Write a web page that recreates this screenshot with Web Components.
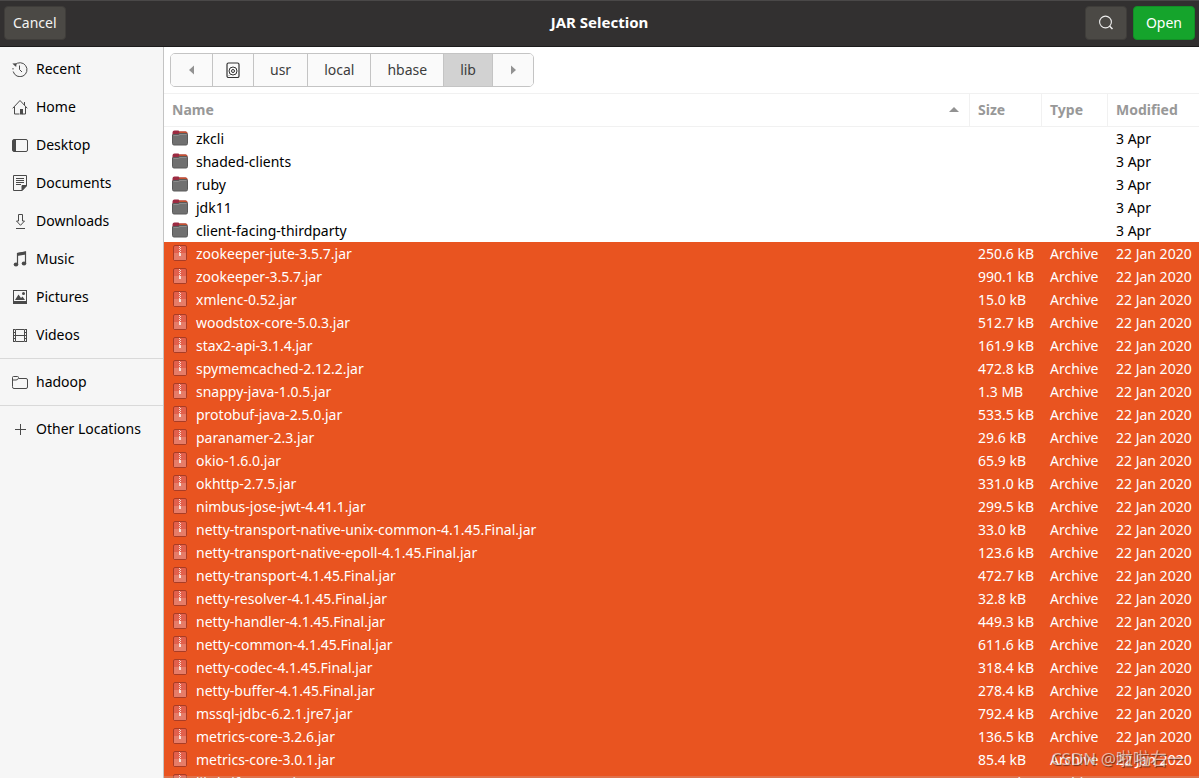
<!DOCTYPE html>
<html lang="en">
<head>
<meta charset="utf-8">
<title>JAR Selection</title>
<style>
html, body { margin: 0; height: 100%; }
body { font: 14px/23px "Noto Sans", "Noto Sans CJK SC", sans-serif; color: #000; background: #fff; overflow: hidden; }
</style>
</head>
<body>
<jar-dialog></jar-dialog>
<script>
const svg = (body, w = 16, h = 16) =>
  `<svg width="${w}" height="${h}" viewBox="0 0 ${w} ${h}" fill="none" stroke="#4a4a4a" aria-hidden="true">${body}</svg>`;

const ICONS = {
  recent: svg('<path d="M2.8 4A7 7 0 1 1 1.200 10.500" /><path d="M.3 2.500 4.500 2.200 4.200 6z" fill="#4a4a4a" stroke="none"/><path d="M1 7v1.500M7.500 4.500v4l2.500 2.500"/>'),
  home: svg('<path d="M.7 9.300 8 1.500l7.300 7.800M2.500 8v7H7.500M10.500 15h3V8M12.500 3v3"/><path d="M8 10h3v5.500H8z" fill="#4a4a4a" stroke="none"/>'),
  desktop: svg('<rect x=".5" y="2.500" width="15" height="12" rx="1.500"/><path d="M1 3h3v11H1z" fill="#4a4a4a" stroke="none"/>'),
  documents: svg('<path d="M1.500.5h13V11L10 15.500H1.500z"/><path d="M14.500 10.500H10v5z" fill="#4a4a4a"/><path d="M4 3.500h8M4 5.500h8M4 7.500h8M4 9.500h5"/>'),
  downloads: svg('<path d="M6.500 1.500h4V8h2L8.500 12.300 4.500 8h2zM4 15.500h9"/>'),
  music: svg('<path d="M5.500 13V2.500L13.500 1v11" stroke-width="1.200"/><path d="M5 2 14 .500v3L5 5z" fill="#4a4a4a" stroke="none"/><ellipse cx="4" cy="13.500" rx="2.300" ry="1.900" fill="#4a4a4a" stroke="none"/><ellipse cx="12" cy="12.500" rx="2.300" ry="1.900" fill="#4a4a4a" stroke="none"/>'),
  pictures: svg('<rect x="1.500" y="1.500" width="13" height="13"/><path d="M3 11 6.500 5.500 9 9l1.500-1.500L13 11zM1 12h14v3H1z" fill="#4a4a4a" stroke="none"/><circle cx="11.500" cy="4.500" r="1.500" fill="#4a4a4a" stroke="none"/>'),
  videos: svg('<path d="M3.500 2.500h9v12h-9zM3.500 8.500h9M1.500 2v13M14.500 2v13"/><path d="M2.500 2v13M13.500 2v13" stroke-dasharray="1 2"/>'),
  folder: svg('<path d="M.5 12.500v-9q0-1 1-1h4q1 0 1 1l.5 1H14q1.500 0 1.500 1.500v7q0 1.500-1.500 1.500H2Q.5 14.500.5 13zM.5 6H4q2 0 2.500-2"/>'),
  plus: svg('<path d="M8.500 3v11M3 8.500h11"/>'),
  disk: svg('<rect x="2" y="1" width="12" height="14.500" rx="1.500" stroke="#333" stroke-width="1.200"/><circle cx="8" cy="9" r="4" stroke="#333"/><circle cx="8" cy="9" r="1.500" stroke="#333"/><path d="M4 13v.5" stroke="#333"/>'),
  search: svg('<circle cx="7.500" cy="7" r="5.900" stroke="#eee" stroke-width="1.100"/><path d="M11.500 11l3 3" stroke="#eee" stroke-width="1.500"/>'),
  left: svg('<path d="M10 3.500v9L5 8z" fill="#929292" stroke="none"/>'),
  right: svg('<path d="M6 3.500v9L11 8z" fill="#929292" stroke="none"/>'),
  dir: svg('<path d="M.5 2.500Q.5.500 2.500.500H6.500l1 1h6q2 0 2 2v3H.5z" fill="#9c2b42" stroke="none"/><path d="M7.500 1.500H13.500q2 0 2 2H7z" fill="#c5512f" stroke="none"/><path d="M.5 5Q.5 4.500 1.500 4.500H6l1.500-1H14.500q1 0 1 1v9q0 1.500-1.500 1.500H2Q.5 15 .5 13.500z" fill="#707070" stroke="#5a5a5a"/><path d="M1.500 5.500H6.500l1.500-1h6.500" stroke="#8c8c8c"/>'),
  jar: svg('<rect x="1.500" y=".5" width="13" height="15" rx="1.500" fill="#e2604c" stroke="#a93c25"/><path d="M2 8h12v7H2z" fill="#e67c68" stroke="none"/><path d="M7.500 1v7" stroke="#f8d8ce" stroke-dasharray="1 1"/><path d="M8.500 2v6" stroke="#f8d8ce" stroke-dasharray="1 1"/><rect x="7" y="8" width="2" height="3" fill="#f8e4dc" stroke="none"/>')
};

/* Attaches an open shadow root holding the given styles and markup. */
function render(el, css, html) {
  const t = document.createElement('template');
  t.innerHTML = `<style>*{box-sizing:border-box}${css}</style>${html}`;
  el.attachShadow({ mode: 'open' }).append(t.content.cloneNode(true));
}

customElements.define('ui-icon', class extends HTMLElement {
  connectedCallback() {
    if (this.shadowRoot) return;
    render(this, ':host{display:block;flex:none;width:16px;height:16px}svg{display:block}', ICONS[this.getAttribute('name')]);
  }
});

customElements.define('header-bar', class extends HTMLElement {
  connectedCallback() {
    render(this, `
      :host{box-sizing:border-box;display:grid;grid-template-columns:1fr auto 1fr;align-items:center;height:47px;padding:0 4px 2px;
        background:#323030;border-top:1px solid #4a4848;border-bottom:1px solid #1c1b1b;color:#fff}
      h1{margin:0;font-size:15px;line-height:23px;font-weight:700}
      .end{display:flex;gap:6px;justify-content:flex-end;align-items:center}
      button{font:inherit;color:#f4f4f2;background:#4b4945;border:1px solid #3f3d3a;border-radius:4px;height:34px;padding:0 8px;justify-self:start}
      .search{padding:0 12px}
      .open{background:#15a42c;border-color:#128f26;color:#fff;padding:0 12px}`,
      `<button type="button">Cancel</button><h1>JAR Selection</h1>
       <div class="end"><button type="button" class="search" aria-label="Search"><ui-icon name="search"></ui-icon></button>
       <button type="button" class="open">Open</button></div>`);
  }
});

customElements.define('place-link', class extends HTMLElement {
  connectedCallback() {
    render(this, `
      :host{display:block}
      a{display:flex;align-items:center;gap:8px;height:38px;padding:0 12px;color:inherit;text-decoration:none;white-space:nowrap}
      span{padding-bottom:2px}`,
      `<a href="#"><ui-icon name="${this.getAttribute('icon')}"></ui-icon><span><slot></slot></span></a>`);
  }
});

customElements.define('places-sidebar', class extends HTMLElement {
  connectedCallback() {
    render(this, `
      :host{display:block;background:#f6f6f6;border-right:1px solid #c4c4c4;padding-top:3px}
      hr{border:0;border-top:1px solid #d9d9d9;margin:4px 0}`,
      `<nav aria-label="Places">${[['recent','Recent'],['home','Home'],['desktop','Desktop'],['documents','Documents'],
        ['downloads','Downloads'],['music','Music'],['pictures','Pictures'],['videos','Videos'],0,['folder','hadoop'],0,['plus','Other Locations']]
        .map(p => p ? `<place-link icon="${p[0]}">${p[1]}</place-link>` : '<hr>').join('')}</nav>`);
  }
});

customElements.define('path-bar', class extends HTMLElement {
  connectedCallback() {
    render(this, `
      :host{display:flex;padding:6px}
      nav{display:flex;height:34px;border:1px solid #c4c4c4;border-radius:5px;overflow:hidden}
      button{font:inherit;color:#3d3d3d;background:#fafafa;border:0;border-left:1px solid #c4c4c4;padding:0 16px 2px;display:flex;align-items:center}
      button:first-child{border-left-color:#fafafa}
      .step{padding:0 12px}
      [aria-current]{background:#d2d2d2}`,
      `<nav aria-label="Path"><button type="button" class="step" aria-label="Back"><ui-icon name="left"></ui-icon></button>
       <button type="button" class="step" aria-label="File system root"><ui-icon name="disk"></ui-icon></button>
       <button type="button">usr</button><button type="button">local</button><button type="button">hbase</button>
       <button type="button" aria-current="true">lib</button>
       <button type="button" class="step" aria-label="Forward"><ui-icon name="right"></ui-icon></button></nav>`);
  }
});

const FOLDERS = ['zkcli', 'shaded-clients', 'ruby', 'jdk11', 'client-facing-thirdparty'];
const JARS = [
  ['zookeeper-jute-3.5.7', '250.6 kB'], ['zookeeper-3.5.7', '990.1 kB'], ['xmlenc-0.52', '15.0 kB'],
  ['woodstox-core-5.0.3', '512.7 kB'], ['stax2-api-3.1.4', '161.9 kB'], ['spymemcached-2.12.2', '472.8 kB'],
  ['snappy-java-1.0.5', '1.3 MB'], ['protobuf-java-2.5.0', '533.5 kB'], ['paranamer-2.3', '29.6 kB'],
  ['okio-1.6.0', '65.9 kB'], ['okhttp-2.7.5', '331.0 kB'], ['nimbus-jose-jwt-4.41.1', '299.5 kB'],
  ['netty-transport-native-unix-common-4.1.45.Final', '33.0 kB'], ['netty-transport-native-epoll-4.1.45.Final', '123.6 kB'],
  ['netty-transport-4.1.45.Final', '472.7 kB'], ['netty-resolver-4.1.45.Final', '32.8 kB'],
  ['netty-handler-4.1.45.Final', '449.3 kB'], ['netty-common-4.1.45.Final', '611.6 kB'],
  ['netty-codec-4.1.45.Final', '318.4 kB'], ['netty-buffer-4.1.45.Final', '278.4 kB'],
  ['mssql-jdbc-6.2.1.jre7', '792.4 kB'], ['metrics-core-3.2.6', '136.5 kB'], ['metrics-core-3.0.1', '85.4 kB'],
  ['libthrift-0.13.0', '246.4 kB']
];

customElements.define('file-table', class extends HTMLElement {
  connectedCallback() {
    const row = (icon, name, size, type, date, cls) =>
      `<tr class="${cls}"><td><div class="name"><ui-icon name="${icon}"></ui-icon>${name}</div></td><td>${size}</td><td>${type}</td><td>${date}</td></tr>`;
    render(this, `
      :host{display:block;min-height:0;overflow:hidden;border-top:1px solid #f1f1f1}
      table{width:100%;border-collapse:separate;border-spacing:0;table-layout:fixed}
      .c-size{width:72px}.c-type{width:66px}.c-mod{width:91px}
      th{height:33px;padding:0 8px 2px;text-align:left;color:#989898;font-weight:700;border-bottom:1px solid #f1f1f1;border-right:1px solid #f1f1f1}
      th:last-child{border-right:0}
      td{height:23px;padding:0 0 0 8px;white-space:nowrap}
      .name,.head{display:flex;align-items:center;gap:8px}
      .name ui-icon{margin-bottom:2px}
      .head{justify-content:space-between}
      .arrow{margin-right:2px;border:5px solid transparent;border-top:0;border-bottom-color:#929292}
      .sel{background:#e95420;color:#fff}`,
      `<table><colgroup><col><col class="c-size"><col class="c-type"><col class="c-mod"></colgroup>
       <thead><tr><th aria-sort="ascending"><div class="head">Name<span class="arrow"></span></div></th><th>Size</th><th>Type</th><th>Modified</th></tr></thead>
       <tbody>${FOLDERS.map(f => row('dir', f, '', '', '3 Apr', '')).join('')}
       ${JARS.map(([n, s]) => row('jar', n + '.jar', s, 'Archive', '22 Jan 2020', 'sel')).join('')}</tbody></table>`);
  }
});

customElements.define('jar-dialog', class extends HTMLElement {
  connectedCallback() {
    render(this, `
      :host{display:grid;grid-template:auto minmax(0,1fr)/164px minmax(0,1fr);height:100vh;position:relative;overflow:hidden}
      header-bar{grid-column:1/-1}
      main{display:flex;flex-direction:column;min-height:0;position:relative}
      main::after{content:"";position:absolute;left:0;right:0;bottom:0;height:2px;background:rgba(200,200,200,.25)}
      .mark{position:absolute;right:15px;bottom:7px;font-size:17px;line-height:24px;color:rgba(255,255,255,.6);text-shadow:1px 1px 1px rgba(60,30,20,.7)}`,
      `<header-bar></header-bar><places-sidebar></places-sidebar>
       <main><path-bar></path-bar><file-table></file-table></main>
       <span class="mark">CSDN @啦啦右一</span>`);
  }
});
</script>
</body>
</html>
